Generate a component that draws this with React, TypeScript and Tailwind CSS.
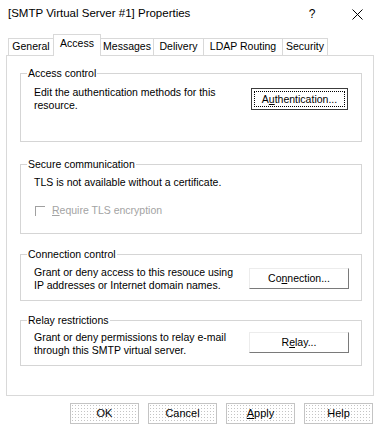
const font = "font-['Liberation_Sans',Arial,sans-serif]";

const tabs = [
  { label: "General", w: "w-[45px]" },
  { label: "Access", w: "w-[48px]", active: true },
  { label: "Messages", w: "w-[52px]" },
  { label: "Delivery", w: "w-[50px]" },
  { label: "LDAP Routing", w: "w-[79px]" },
  { label: "Security", w: "w-[46px]" },
];

function Mnemonic({ before, letter, after }: { before?: string; letter: string; after: string }) {
  return (
    <>
      {before}
      <span className="underline underline-offset-[1px]">{letter}</span>
      {after}
    </>
  );
}

function Raised({ children }: { children: React.ReactNode }) {
  return (
    <button className="flex h-[21px] w-[100px] flex-none items-center justify-center border border-t-[#ececec] border-l-[#ececec] border-r-[#7a7a7a] border-b-[#7a7a7a] bg-white text-[10.5px] leading-none">
      {children}
    </button>
  );
}

function Group({
  title,
  h,
  pt,
  className = "",
  children,
}: {
  title: string;
  h: string;
  pt: string;
  className?: string;
  children: React.ReactNode;
}) {
  return (
    <fieldset className={`${h} ${pt} ${className} border border-[#d5d5d5] pl-[13px] pr-[12px]`}>
      <legend className="-ml-[7px] px-[1px] leading-[13px]">{title}</legend>
      {children}
    </fieldset>
  );
}

function FooterButton({ children }: { children: React.ReactNode }) {
  return (
    <button className="flex h-[21px] w-[69px] items-center justify-center border border-[#c4c4c4] bg-white bg-[radial-gradient(circle,#c4c4c4_0.8px,transparent_1px)] bg-[length:3px_3px] text-[11px] leading-none">
      {children}
    </button>
  );
}

export default function App() {
  return (
    <div className={`${font} h-[430px] w-[380px] bg-white text-[10.5px] text-black`}>
      <div className="flex h-[28px] items-center">
        <span className="pl-[8px] text-[11.5px]">[SMTP Virtual Server #1] Properties</span>
        <span className="ml-auto flex w-[44px] justify-center text-[12px]">?</span>
        <span className="flex w-[46px] justify-center">
          <svg width="11" height="11" viewBox="0 0 11 11" stroke="#000" strokeWidth="1">
            <path d="M0.5 0.5l10 10M10.5 0.5l-10 10" />
          </svg>
        </span>
      </div>

      <div className="flex h-[27px] items-end pl-[8px]">
        {tabs.map((t, i) => (
          <div
            key={t.label}
            className={[
              "flex flex-none items-center justify-center border-t border-[#d9d9d9] bg-white",
              t.w,
              t.active
                ? "relative z-10 -mb-px h-[22px] border-x pb-[3px]"
                : "h-[17px]",
              !t.active && i !== 2 ? "border-l" : "",
              i === tabs.length - 1 ? "border-r" : "",
            ].join(" ")}
          >
            {t.label}
          </div>
        ))}
      </div>

      <div className="mx-[6px] flex h-[341px] flex-col border border-[#d9d9d9] pl-[13px] pr-[11px] pt-[11px]">
        <Group title="Access control" h="h-[75px]" pt="pt-[6px]">
          <div className="flex items-start">
            <p className="leading-[13px]">
              Edit the authentication methods for this
              <br />
              resource.
            </p>
            <button className="ml-auto mr-[1px] mt-[2px] flex h-[22px] w-[97px] flex-none items-center justify-center border border-[#3c3c3c] bg-white p-[2px]">
              <span className="flex h-full w-full items-center justify-center border border-dotted border-black leading-none">
                <Mnemonic before="A" letter="u" after="thentication..." />
              </span>
            </button>
          </div>
        </Group>

        <Group title="Secure communication" h="h-[76px]" pt="pt-[5px]" className="mt-[16px]">
          <p className="leading-[13px]">TLS is not available without a certificate.</p>
          <div className="mt-[15px] flex items-center text-[#a3a3a3]">
            <span className="ml-[1px] h-[10px] w-[10px] border-l border-t border-[#a0a0a0]" />
            <span className="ml-[7px] leading-[13px]">
              <Mnemonic letter="R" after="equire TLS encryption" />
            </span>
          </div>
        </Group>

        <Group title="Connection control" h="h-[53px]" pt="pt-[5px]" className="mt-[14px]">
          <div className="flex items-start">
            <p className="leading-[13px]">
              Grant or deny access to this resouce using
              <br />
              IP addresses or Internet domain names.
            </p>
            <div className="ml-auto mt-[2px]">
              <Raised>
                <Mnemonic before="Co" letter="n" after="nection..." />
              </Raised>
            </div>
          </div>
        </Group>

        <Group title="Relay restrictions" h="h-[52px]" pt="pt-[4px]" className="mt-[13px]">
          <div className="flex items-start">
            <p className="leading-[13px]">
              Grant or deny permissions to relay e-mail
              <br />
              through this SMTP virtual server.
            </p>
            <div className="ml-auto mt-[1px]">
              <Raised>
                <Mnemonic before="R" letter="e" after="lay..." />
              </Raised>
            </div>
          </div>
        </Group>
      </div>

      <div className="mt-[7px] flex justify-end gap-[9px] pr-[7px]">
        <FooterButton>OK</FooterButton>
        <FooterButton>Cancel</FooterButton>
        <FooterButton>
          <Mnemonic letter="A" after="pply" />
        </FooterButton>
        <FooterButton>Help</FooterButton>
      </div>
    </div>
  );
}
